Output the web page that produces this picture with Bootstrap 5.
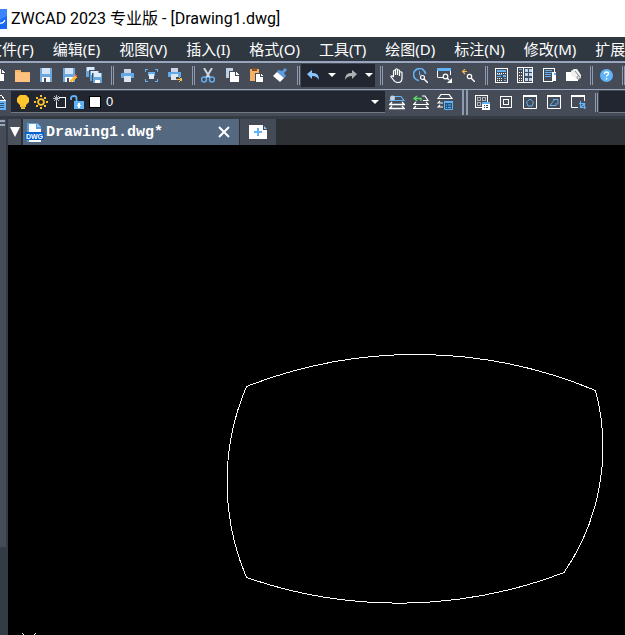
<!DOCTYPE html>
<html lang="zh-CN">
<head>
<meta charset="utf-8">
<meta name="viewport" content="width=device-width, initial-scale=1">
<title>ZWCAD 2023</title>
<link href="https://cdn.jsdelivr.net/npm/bootstrap@5.3.0/dist/css/bootstrap.min.css" rel="stylesheet">
<style>
:root{--edge:#9aa6bf;--panel:#454c58;--ink:#222630;--blue:#62b2f5}
body{font-family:"Noto Sans","Noto Sans CJK SC",sans-serif;background:#000;overflow:hidden}
svg{display:block;flex:none}
.title-bar{height:37px;font-family:Roboto,"Noto Sans CJK SC",sans-serif;font-size:16px;color:#000}
.app-logo{width:7px;height:20px}
.menu-bar{height:26px;background:#2f3841;border-bottom:2px solid var(--edge);font-size:15px;gap:19px;margin:0}
.menu-bar a{color:#fff;text-decoration:none;white-space:nowrap;line-height:24px}
.menu-bar a:first-child{margin-left:-13px}
.tools{background:var(--panel);height:27px;border-bottom:1px solid var(--edge);padding-bottom:2px}
.tools.second{height:29px;border-bottom:3px solid #343b45;padding-bottom:2px}
.tool{width:24px;height:24px;padding:0;border:0;background:none;display:flex;align-items:center;justify-content:center;flex:none}
.tool.cut-off{width:10px;justify-content:flex-end;overflow:hidden}
.tool.slim{width:18px}
.tool.caret{width:13px}
.split{width:3px;height:19px;margin-left:5px;margin-right:1px;border:solid #8d9ab2;border-width:0 1px;flex:none}
.split.wide{width:6px;height:25px;border-width:0 2px;margin-right:2px}
.history{background:var(--ink);width:74px;height:23px;flex:none}
.layer-box{background:var(--ink);border-bottom:1px solid #747981;height:22px;min-width:0;margin-left:1px;padding-left:3px}
.layer-box select{appearance:none;border:0;background:transparent url("data:image/svg+xml,%3Csvg xmlns='http://www.w3.org/2000/svg' width='8' height='4'%3E%3Cpath d='M0 0h8L4 4z' fill='white'/%3E%3C/svg%3E") no-repeat right 6px center;color:#fff;font:13px "Liberation Sans",sans-serif;height:20px;min-width:0;padding:0 18px 0 2px}
.style-box{background:var(--ink);border:0;border-bottom:1px solid #747981;width:26px;height:22px;min-width:0}
.side-rail{width:8px;background:#333b45}
.rail-grip{width:6px;height:428px;background:var(--panel);padding-top:1px}
.rail-grip i{display:block;width:5px;height:2px;background:#98a5bb;margin-bottom:2px}
.tab-strip{height:26px;background:#2d3035}
.tab-menu{width:13px;height:26px;background:#4a515c;border:0;padding:0;margin-right:2px}
.doc-tab{width:216px;background:#54687f;color:#fff;font:bold 15px "Liberation Mono",monospace;padding-left:2px}
.doc-tab .file-link{color:#fff;text-decoration:none;gap:2px}
.doc-tab .tool{margin-right:3px}
.add-tab{width:36px;height:26px;background:#454b56;border:0;padding:0;margin-left:1px}
.canvas-area{background:#000;min-height:0}
</style>
<script src="https://cdn.jsdelivr.net/npm/bootstrap@5.3.0/dist/js/bootstrap.bundle.min.js"></script>
</head>
<body class="d-flex flex-column vh-100">
<header class="title-bar bg-white d-flex align-items-center flex-shrink-0">
  <svg class="app-logo" viewBox="0 0 7 20"><path d="M0 0h7v20H0z" fill="#1769f5"/><path d="M0 0h7v7L0 11z" fill="#3b86ff"/><path d="M0 14q3 1 5-3" stroke="#fff" stroke-width="1.3" fill="none"/></svg>
  <span class="text-nowrap ms-1">ZWCAD 2023 专业版 - [Drawing1.dwg]</span>
</header>
<nav class="menu-bar d-flex align-items-start flex-shrink-0 overflow-hidden" aria-label="菜单">
  <a href="#">文件(F)</a><a href="#">编辑(E)</a><a href="#">视图(V)</a><a href="#">插入(I)</a><a href="#">格式(O)</a><a href="#">工具(T)</a><a href="#">绘图(D)</a><a href="#">标注(N)</a><a href="#">修改(M)</a><a href="#">扩展</a>
</nav>

<div class="tools d-flex align-items-center flex-shrink-0 overflow-hidden" role="toolbar" aria-label="标准">
  <button class="tool cut-off" aria-label="新建"><svg width="14" height="14" viewBox="0 0 14 14" shape-rendering="crispEdges"><path d="M0 1h5v5h3v7H0z" fill="#fff"/><path d="M6 1l3 4H6z" fill="#fff"/></svg></button>
  <button class="tool" aria-label="打开"><svg width="15" height="13" viewBox="0 0 15 13" shape-rendering="crispEdges"><path d="M0 1h6v2h9v10H0z" fill="#f7b566"/><path d="M0 3h5l2 1h8v9H0z" fill="#ffc180"/></svg></button>
  <button class="tool" aria-label="保存"><svg width="12" height="14" viewBox="0 0 12 14" shape-rendering="crispEdges"><path d="M0 0h12v14H0z" fill="#6ca7dd"/><path d="M2 0h8v6H2z" fill="#d5e4f6"/><path d="M2 9h8v5H2z" fill="#f4f7fc"/><path d="M4 10h2v4H4z" fill="#3d4a5a"/></svg></button>
  <button class="tool" aria-label="另存为"><svg width="14" height="15" viewBox="0 0 14 15" shape-rendering="crispEdges"><path d="M0 0h12v14H0z" fill="#6ca7dd"/><path d="M2 0h8v6H2z" fill="#d5e4f6"/><path d="M2 9h8v5H2z" fill="#f4f7fc"/><path d="M4 10h2v4H4z" fill="#3d4a5a"/><path d="M7 14l1-3 4-4 2 2-4 4z" fill="#ffb52d"/><path d="M11 7l2-1 1 2-1 1z" fill="#ed5050"/></svg></button>
  <button class="tool" aria-label="全部保存"><svg width="16" height="16" viewBox="0 0 16 16" shape-rendering="crispEdges"><path d="M0 0h9v10H0z" fill="#68a7dc"/><path d="M1 0h7v4H1z" fill="#dfebf7"/><path d="M3 3h11v11H3z" fill="#454c58"/><g transform="translate(4 4)"><path d="M0 0h9v10H0z" fill="#68a7dc"/><path d="M1 0h7v4H1z" fill="#dfebf7"/></g><path d="M6 6h10v10H6z" fill="#454c58"/><g transform="translate(7 6)"><path d="M0 0h9v10H0z" fill="#68a7dc"/><path d="M1 0h7v4H1z" fill="#dfebf7"/><path d="M2 7h5v3H2z" fill="#fff"/></g></svg></button>
  <span class="split"></span>
  <button class="tool" aria-label="打印"><svg width="13" height="13" viewBox="0 0 13 13" shape-rendering="crispEdges"><path d="M3 0h7v5H3z" fill="#cbd7e8"/><path d="M0 4h13v5H0z" fill="#64a9e7"/><path d="M3 7h7v6H3z" fill="#dce5f2"/></svg></button>
  <button class="tool" aria-label="打印预览"><svg width="13" height="13" viewBox="0 0 13 13" shape-rendering="crispEdges"><path d="M.5 3V.5H3M10 .5h2.500V3M12.500 10v2.500H10M3 12.500H.5V10" fill="none" stroke="#62b2f5"/><path d="M3 3h7v4H3z" fill="#62aef0"/><path d="M4 5h5v5H4z" fill="#e1eaf5"/></svg></button>
  <button class="tool" aria-label="发布"><svg width="14" height="14" viewBox="0 0 14 14" shape-rendering="crispEdges"><path d="M3 0h7v4H3z" fill="#cbd7e8"/><path d="M0 4h13v5H0z" fill="#64a9e7"/><path d="M3 6h7v6H3z" fill="#dce5f2"/><path d="M8 9h6v5H8z" fill="#454c58"/><path d="M8 11.500h6M11 9l3 2.500-3 2.500" fill="none" stroke="#f4bd4f"/></svg></button>
  <span class="split"></span>
  <button class="tool" aria-label="剪切"><svg width="14" height="15" viewBox="0 0 14 15"><path d="M3 0l6 10M11 0L5 10" stroke="#cbd6e6" stroke-width="2" fill="none"/><circle cx="3" cy="11.500" r="2.500" fill="none" stroke="#62aef0" stroke-width="1.400"/><circle cx="11" cy="11.500" r="2.500" fill="none" stroke="#62aef0" stroke-width="1.400"/></svg></button>
  <button class="tool" aria-label="复制"><svg width="13" height="14" viewBox="0 0 13 14" shape-rendering="crispEdges"><path d="M0 0h7v10H0z" fill="#bfd1e6"/><path d="M3 3h7v11H3z" fill="#454c58"/><path d="M4 4h5v4h4v6H4z" fill="#fff"/><path d="M10 4l3 3h-3z" fill="#fff"/></svg></button>
  <button class="tool" aria-label="粘贴"><svg width="13" height="14" viewBox="0 0 13 14" shape-rendering="crispEdges"><path d="M0 1h9v12H0z" fill="#f5b165"/><path d="M3 0h4v3H2z" fill="#8d5020"/><path d="M5 5h8v9H5z" fill="#454c58"/><path d="M6 6h4v3h3v5H6z" fill="#fff"/><path d="M11 6l2 2h-2z" fill="#fff"/></svg></button>
  <button class="tool" aria-label="特性匹配"><svg width="14" height="14" viewBox="0 0 14 14"><path d="M9 3l3-3 2 2-3 3 2 3-2 2-7-6 1-2z" fill="#5b9edf"/><path d="M0 8l4-4 7 6-4 4z" fill="#fff"/></svg></button>
  <span class="split"></span>
  <div class="history d-flex align-items-center">
    <button class="tool" aria-label="放弃"><svg width="13" height="10" viewBox="0 0 13 10"><path d="M0 4l5-4v3q7-1 7 7-2-4-7-4v3z" fill="#8bc5ff"/></svg></button>
    <button class="tool caret" aria-label="放弃列表"><svg width="8" height="4" viewBox="0 0 8 4"><path d="M0 0h8L4 4z" fill="#fff"/></svg></button>
    <button class="tool" aria-label="重做"><svg width="13" height="10" viewBox="0 0 13 10"><path d="M13 4L8 0v3Q1 2 1 10q2-4 7-4v3z" fill="#aeb0b4"/></svg></button>
    <button class="tool caret" aria-label="重做列表"><svg width="8" height="4" viewBox="0 0 8 4"><path d="M0 0h8L4 4z" fill="#fff"/></svg></button>
  </div>
  <span class="split"></span>
  <button class="tool" aria-label="平移"><svg width="13" height="15" viewBox="0 0 13 15"><path d="M3.500 9V3q1-1.500 2 0v4-5.500q1-1.500 2 0V7 2.500q1-1.500 2 0V8 4.500q1.500-1.500 2.500 0V10q0 4.500-4 4.500-3 0-4.500-2.500L.8 8.500q1-1.500 2.700.5" fill="none" stroke="#fff" stroke-width="1.200"/></svg></button>
  <button class="tool" aria-label="实时缩放"><svg width="15" height="15" viewBox="0 0 15 15"><path d="M6 12.500A6 6 0 1 1 12.500 6" fill="none" stroke="#5fb0f5" stroke-width="1.700"/><path d="M6.500 3v4h2" stroke="#62b2f5" fill="none"/><circle cx="9.500" cy="9.500" r="2" fill="none" stroke="#fff" stroke-width="1.200"/><path d="M11 11l4 4" stroke="#fff" stroke-width="1.400"/></svg></button>
  <button class="tool" aria-label="窗口缩放"><svg width="15" height="15" viewBox="0 0 15 15"><path d="M.5 9V1.500h13V7M.5 9.500H6" fill="none" stroke="#fff"/><path d="M0 0h14v3H0z" fill="#62b2f5"/><circle cx="8.500" cy="8.500" r="2.300" fill="none" stroke="#fff" stroke-width="1.200"/><path d="M10 10l2 2" stroke="#fff" stroke-width="1.400"/><path d="M15 10v5h-5z" fill="#fff"/></svg></button>
  <button class="tool" aria-label="缩放上一个"><svg width="13" height="13" viewBox="0 0 13 13"><path d="M0 2.500h5M3 0L.7 2.500 3 5" fill="none" stroke="#f0ba50" stroke-width="1.200"/><circle cx="7.500" cy="7.500" r="2.200" fill="none" stroke="#fff" stroke-width="1.200"/><path d="M9 9l4 4" stroke="#fff" stroke-width="1.400"/></svg></button>
  <span class="split"></span>
  <button class="tool" aria-label="特性"><svg width="13" height="15" viewBox="0 0 13 15" shape-rendering="crispEdges"><path d="M.5.5h12v14H.5z" fill="none" stroke="#fff"/><path d="M2 2h9v2H2zM2 8h4v1H2zM2 6h5v1H2zM8 7h3v2H8z" fill="#62b2f5"/><path d="M2 5.500h9M2 10.500h6M2 12.500h6" stroke="#fff" stroke-dasharray="1 1"/><path d="M9 10h2v1H9zM9 12h2v1H9z" fill="#62b2f5"/></svg></button>
  <button class="tool" aria-label="设计中心"><svg width="16" height="16" viewBox="0 0 16 16" shape-rendering="crispEdges"><path d="M.5.5h15v15H.5zM6.500 0v16" fill="none" stroke="#fff"/><path d="M2 2h3v1H2z" fill="#62b2f5"/><path d="M2 5.500h3M2 8.500h3M2 11.500h3M2 13.500h3" stroke="#fff" stroke-dasharray="1 1"/><path d="M8 2h3v3H8zM12 2h3v3h-3zM8 6h3v3H8zM12 6h3v3h-3zM8 11h3v3H8zM12 11h3v3h-3z" fill="#b8d7f5"/></svg></button>
  <button class="tool" aria-label="工具选项板"><svg width="13" height="14" viewBox="0 0 13 14" shape-rendering="crispEdges"><path d="M11.500 4V.5H.5v13h9" fill="none" stroke="#fff"/><path d="M9 4h4v9H9z" fill="#fff"/><path d="M11 5h2v2h-2z" fill="#62b2f5"/><path d="M2 2.500h7M2 4.500h7M2 6.500h6M2 8.500h6" stroke="#62b2f5"/></svg></button>
  <button class="tool" aria-label="清理"><svg width="15" height="12" viewBox="0 0 15 12"><path d="M0 3h5l4 4 3 1v4H0z" fill="#fff"/><path d="M5 2l3-2h3l4 6v3l-3 2-7-5z" fill="#f1f1ef"/><path d="M9 2l4 5" stroke="#858b91"/><circle cx="12.500" cy="8.500" r="1.500" fill="none" stroke="#81868c"/></svg></button>
  <span class="split"></span>
  <button class="tool" aria-label="帮助"><svg width="13" height="13" viewBox="0 0 13 13"><circle cx="6.500" cy="6.500" r="6.500" fill="#60b5fa"/><path d="M4.500 5q0-2 2-2t2 1.700q0 1-1.200 1.500-.8.500-.8 1.500M6.500 9v1.500" stroke="#fff" fill="none" stroke-width="1.300"/></svg></button>
  <span class="split ms-auto me-0"></span>
</div>

<div class="tools second d-flex align-items-center flex-shrink-0 overflow-hidden" role="toolbar" aria-label="图层">
  <button class="tool cut-off" aria-label="图层特性"><svg class="me-1" width="16" height="16" viewBox="0 0 16 16" shape-rendering="crispEdges"><path d="M5 5V1h6l4 5h-5" fill="none" stroke="#fff"/><path d="M5 7h11v9H5z" fill="#62b2f5"/><path d="M6 9.500h8M6 11.500h8M6 13.500h8" stroke="#2c587c"/></svg></button>
  <div class="layer-box d-flex align-items-center flex-grow-1">
    <button class="tool slim" aria-label="开关图层"><svg width="12" height="14" viewBox="0 0 12 14"><path d="M3 0h6l3 3v4l-3 3v1H3v-1L0 7V3z" fill="#ffc52f"/><path d="M3 11h6v1H8v2H4v-2H3z" fill="#ffc52f"/><path d="M4 12h4" stroke="#a87a1c" stroke-width=".5"/></svg></button>
    <button class="tool slim" aria-label="冻结图层"><svg width="14" height="14" viewBox="0 0 14 14"><circle cx="7" cy="7" r="2.900" fill="none" stroke="#ffc52f" stroke-width="1.800"/><path d="M6 0h2v2H6zM6 12h2v2H6zM0 6h2v2H0zM12 6h2v2h-2zM2 2h2v2H2zM10 2h2v2h-2zM2 10h2v2H2zM10 10h2v2h-2z" fill="#ffc52f"/></svg></button>
    <button class="tool slim" aria-label="视口冻结"><svg width="13" height="13" viewBox="0 0 13 13" shape-rendering="crispEdges"><path d="M3 6v6.500h9.500v-10H6" fill="none" stroke="#fff"/><path d="M3.500 0v7M0 3.500h7M1 1l5 5M6 1L1 6" stroke="#b3b5b8"/></svg></button>
    <button class="tool slim" aria-label="锁定图层"><svg width="14" height="14" viewBox="0 0 14 14"><path d="M1 5V3q0-2 3-2 2.500 0 2.500 2v4" fill="none" stroke="#62b2f5" stroke-width="1.800"/><path d="M4 6h10v8H4z" fill="#62b2f5"/><path d="M8 8h2v2h1v1h-1v2H8v-2H7v-1h1z" fill="#fff"/></svg></button>
    <button class="tool slim" aria-label="图层颜色"><svg width="12" height="12" viewBox="0 0 12 12" shape-rendering="crispEdges"><path d="M.5.5h11v11H.5z" fill="#fff" stroke="#000"/></svg></button>
    <select class="flex-grow-1" aria-label="当前图层"><option>0</option></select>
  </div>
  <button class="tool" aria-label="图层置为当前"><svg width="16" height="15" viewBox="0 0 16 15"><path d="M1 5.500l3-4h8l3 4z" fill="none" stroke="#62b2f5" stroke-width="1.200"/><circle cx="3.500" cy="3" r="2.500" fill="#c4d2e2"/><path d="M3 7L.7 9.500h14.600L13 7M3 11L.7 13.500h14.600L13 11" fill="none" stroke="#fff" stroke-width="1.300"/></svg></button>
  <button class="tool" aria-label="上一个图层"><svg width="16" height="15" viewBox="0 0 16 15"><path d="M9 1h3l3 4.500H10M3 7L.7 9.500h14.600L13 7M3 11L.7 13.500h14.600L13 11" fill="none" stroke="#fff" stroke-width="1.200"/><path d="M8 6V3.500H1M4 1L1 3.500 4 6" fill="none" stroke="#5adc66" stroke-width="1.300"/></svg></button>
  <button class="tool" aria-label="图层状态"><svg width="16" height="16" viewBox="0 0 16 16"><path d="M1 4.500l3-4h8l3 4zM3 7L1 9h5M3 11l-2 2h5" fill="none" stroke="#fff" stroke-width="1.200"/><path d="M7.500 7.500h8v8h-8z" fill="#24567d" stroke="#62b2f5"/><path d="M7 8h9" stroke="#62b2f5" stroke-width="2"/><path d="M9 11h1M11 11h3M9 13.500h1M11 13.500h3" stroke="#62b2f5"/></svg></button>
  <span class="split wide"></span>
  <button class="tool" aria-label="视口对话框"><svg width="15" height="15" viewBox="0 0 15 15" shape-rendering="crispEdges"><path d="M.5.5h12v12H.5z" fill="none" stroke="#fff"/><path d="M2.500 2.500h3v3h-3zM7.500 2.500h3v3h-3zM2.500 7.500h3v3h-3z" fill="none" stroke="#adb2b9"/><path d="M7 7h8v8H7z" fill="#fff"/><path d="M7 7h8v2H7z" fill="#62b2f5"/><path d="M9 10h1v1H9zM11 10h2v1h-2zM9 12h1v1H9zM11 12h2v1h-2z" fill="#3b4654"/></svg></button>
  <button class="tool" aria-label="单个视口"><svg width="12" height="12" viewBox="0 0 12 12" shape-rendering="crispEdges"><path d="M.5.5h11v11H.5zM3.500 3.500h5v5h-5z" fill="none" stroke="#fff"/></svg></button>
  <button class="tool" aria-label="多边形视口"><svg width="14" height="14" viewBox="0 0 14 14"><path d="M.5.5h13v13H.5z" fill="none" stroke="#fff"/><path d="M0 1h14" stroke="#fff" stroke-width="2"/><path d="M7 4l3.500 3L9 11H5L3.500 7z" fill="none" stroke="#62b2f5"/></svg></button>
  <button class="tool" aria-label="对象转换视口"><svg width="14" height="14" viewBox="0 0 14 14"><path d="M.5.5h13v13H.5z" fill="none" stroke="#fff"/><path d="M0 1h14" stroke="#fff" stroke-width="2"/><path d="M6 4.500h5v5M8 4l-5 6.500h6V8" fill="none" stroke="#62b2f5"/></svg></button>
  <button class="tool" aria-label="裁剪视口"><svg width="15" height="14" viewBox="0 0 15 14"><path d="M7 12.500H.5V.5h13V6" fill="none" stroke="#fff"/><path d="M0 1h14" stroke="#fff" stroke-width="2"/><path d="M9.500 6v6.500H15M8 8.500h5.500V14M10 12l4-4" fill="none" stroke="#62b2f5" stroke-width="1.200"/></svg></button>
  <span class="split"></span>
  <input class="style-box" aria-label="样式">
</div>

<div class="d-flex flex-grow-1 overflow-hidden">
  <aside class="side-rail flex-shrink-0"><div class="rail-grip"><i></i><i></i></div></aside>
  <main class="d-flex flex-column flex-grow-1 overflow-hidden">
    <div class="tab-strip d-flex flex-shrink-0">
      <button class="tab-menu d-flex align-items-center justify-content-center" aria-label="文档列表"><svg width="10" height="10" viewBox="0 0 10 10"><path d="M0 0h10L5 10z" fill="#fff"/></svg></button>
      <div class="doc-tab d-flex align-items-center justify-content-between">
        <a href="#" class="file-link d-flex align-items-center"><svg width="19" height="19" viewBox="0 0 19 19"><path d="M2 0h10l4 4v15H2z" fill="#5b9cdb"/><path d="M4 1h7v5h5v13H4z" fill="#fff"/><path d="M12 0l4 4h-4z" fill="#8ec4ff"/><path d="M0 9h19v8H0z" fill="#0863d2"/><text x="9.500" y="16" text-anchor="middle" fill="#fff" font-family="Liberation Sans" font-weight="bold" font-size="7">DWG</text></svg><span>Drawing1.dwg*</span></a>
        <button class="tool" aria-label="关闭"><svg width="12" height="12" viewBox="0 0 12 12"><path d="M1 1l10 10M11 1L1 11" stroke="#fff" stroke-width="2"/></svg></button>
      </div>
      <button class="add-tab d-flex align-items-center justify-content-center" aria-label="新建图形"><svg width="18" height="14" viewBox="0 0 18 14"><path d="M0 0h14v5h4v9H0z" fill="#fff"/><path d="M15 1l3 3h-3z" fill="#8ec4ff"/><path d="M5 7h8M9 3v8" stroke="#62b2f5" stroke-width="2"/></svg></button>
    </div>
    <div class="canvas-area flex-grow-1">
      <svg class="w-100 h-100" role="img" aria-label="图形"><g transform="translate(-8 -145)" fill="none" stroke="#fff" shape-rendering="crispEdges"><path d="M246.500 386.500A465 465 0 0 1 595.500 390.500A221 221 0 0 1 564 572.500A463 463 0 0 1 246.500 577.500A244 244 0 0 1 246.500 386.500z"/><path d="M22 633l3 3M36 633l-3 3"/></g></svg>
    </div>
  </main>
</div>
</body>
</html>
